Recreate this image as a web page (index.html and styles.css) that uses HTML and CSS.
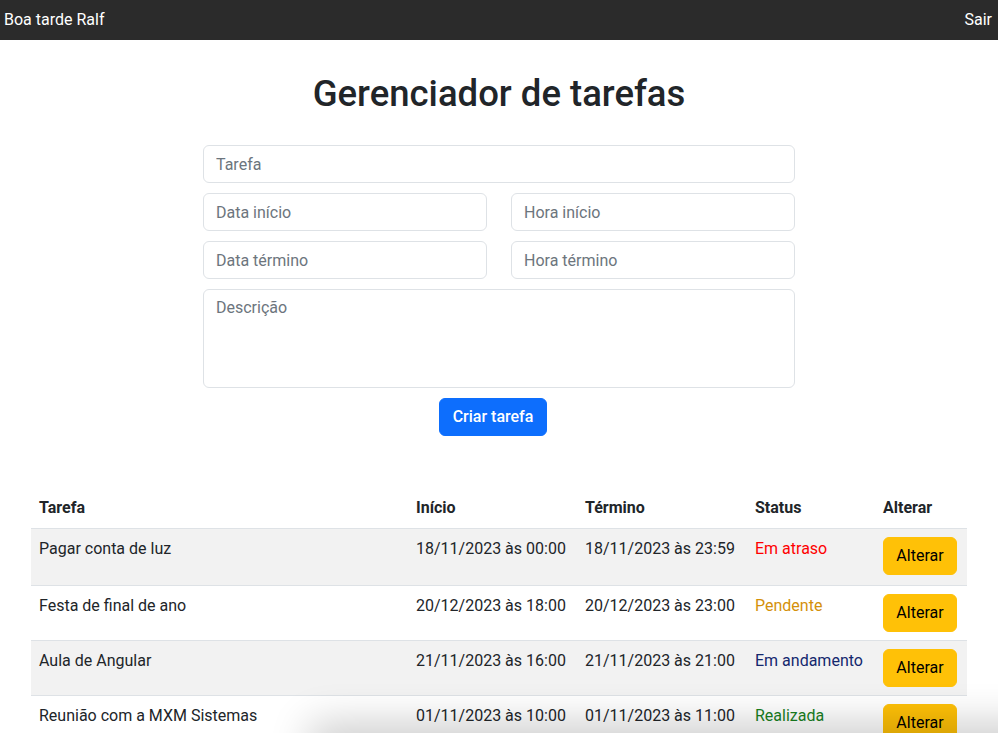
FILE: index.html
```html
<!DOCTYPE html>
<html lang="pt-BR">
<head>
<meta charset="utf-8">
<title>Gerenciador de tarefas</title>
<link rel="stylesheet" href="styles.css">
</head>
<body>
<nav class="topbar">
  <span class="greet">Boa tarde Ralf</span>
  <a class="logout" href="#">Sair</a>
</nav>
<main class="container">
  <h1 class="title">Gerenciador de tarefas</h1>
  <form class="task-form">
    <input class="field" type="text" placeholder="Tarefa">
    <div class="pair">
      <input class="field" type="text" placeholder="Data início">
      <input class="field" type="text" placeholder="Hora início">
    </div>
    <div class="pair">
      <input class="field" type="text" placeholder="Data término">
      <input class="field" type="text" placeholder="Hora término">
    </div>
    <textarea class="field area" placeholder="Descrição"></textarea>
    <div class="actions">
      <button type="button" class="btn-primary">Criar tarefa</button>
    </div>
  </form>
  <table class="tasks">
    <thead>
      <tr>
        <th class="c-task">Tarefa</th>
        <th class="c-start">Início</th>
        <th class="c-end">Término</th>
        <th class="c-status">Status</th>
        <th class="c-edit">Alterar</th>
      </tr>
    </thead>
    <tbody>
      <tr class="odd first">
        <td>Pagar conta de luz</td>
        <td>18/11/2023 às 00:00</td>
        <td>18/11/2023 às 23:59</td>
        <td class="st-late">Em atraso</td>
        <td><button type="button" class="btn-warn">Alterar</button></td>
      </tr>
      <tr>
        <td>Festa de final de ano</td>
        <td>20/12/2023 às 18:00</td>
        <td>20/12/2023 às 23:00</td>
        <td class="st-pending">Pendente</td>
        <td><button type="button" class="btn-warn">Alterar</button></td>
      </tr>
      <tr class="odd">
        <td>Aula de Angular</td>
        <td>21/11/2023 às 16:00</td>
        <td>21/11/2023 às 21:00</td>
        <td class="st-progress">Em andamento</td>
        <td><button type="button" class="btn-warn">Alterar</button></td>
      </tr>
      <tr>
        <td>Reunião com a MXM Sistemas</td>
        <td>01/11/2023 às 10:00</td>
        <td>01/11/2023 às 11:00</td>
        <td class="st-done">Realizada</td>
        <td><button type="button" class="btn-warn">Alterar</button></td>
      </tr>
    </tbody>
  </table>
</main>
<div class="bottom-shade"></div>
</body>
</html>
```

FILE: styles.css
```css
* { box-sizing: border-box; }
html, body { margin: 0; padding: 0; }
body {
  font-family: Roboto, "Noto Sans", "Liberation Sans", sans-serif;
  font-size: 16px;
  line-height: 24px;
  color: #212529;
  background: #fff;
  overflow: hidden;
}
.topbar {
  height: 40px;
  background: #2b2b2b;
  display: flex;
  align-items: center;
  justify-content: space-between;
  padding: 0 6px 0 4px;
  color: #fff;
}
.logout { color: #fff; text-decoration: none; }
.container {
  width: 960px;
  margin: 0 auto;
  padding: 0 12px;
}
.title {
  margin: 32px 0 0;
  text-align: center;
  font-size: 36.5px;
  line-height: 44px;
  font-weight: 500;
}
.task-form {
  width: 592px;
  margin: 29px auto 0;
  display: flex;
  flex-direction: column;
  gap: 10px;
}
.pair {
  display: grid;
  grid-template-columns: 1fr 1fr;
  gap: 24px;
}
.field {
  display: block;
  width: 100%;
  height: 38px;
  padding: 6px 12px;
  font: inherit;
  color: #212529;
  border: 1px solid #dee2e6;
  border-radius: 6px;
  background: #fff;
}
.field::placeholder { color: #6c757d; opacity: 1; }
.area { height: 99px; resize: none; }
.actions {
  display: flex;
  justify-content: center;
  padding-right: 12px;
}
.btn-primary {
  height: 38px;
  width: 108px;
  padding: 0;
  font: inherit;
  color: #fff;
  background: #0d6efd;
  border: 1px solid #0d6efd;
  border-radius: 6px;
  font-weight: 500;
}
.tasks {
  width: 100%;
  margin-top: 52px;
  border-collapse: collapse;
}
.tasks th, .tasks td {
  padding: 8px;
  text-align: left;
  vertical-align: top;
  white-space: nowrap;
  border-bottom: 1px solid #dee2e6;
}
.tasks th { font-weight: 700; }
.tasks tbody tr.odd td { background: #f2f2f2; }
.tasks tbody tr.first td { padding-bottom: 10px; }
.c-task { width: 377px; }
.c-start { width: 169px; }
.c-end { width: 170px; }
.c-status { width: 128px; }
.c-edit { width: 92px; }
.st-late { color: #ff0000; }
.st-pending { color: #d4900a; }
.st-progress { color: #14286e; }
.st-done { color: #19801f; }
.btn-warn {
  height: 38px;
  width: 74px;
  font: inherit;
  color: #000;
  background: #ffc107;
  border: 1px solid #ffc107;
  border-radius: 6px;
}
.bottom-shade {
  position: fixed;
  left: 320px;
  right: -40px;
  bottom: -30px;
  height: 30px;
  box-shadow: 0 0 40px 10px rgba(0, 0, 0, 0.2);
}
```
